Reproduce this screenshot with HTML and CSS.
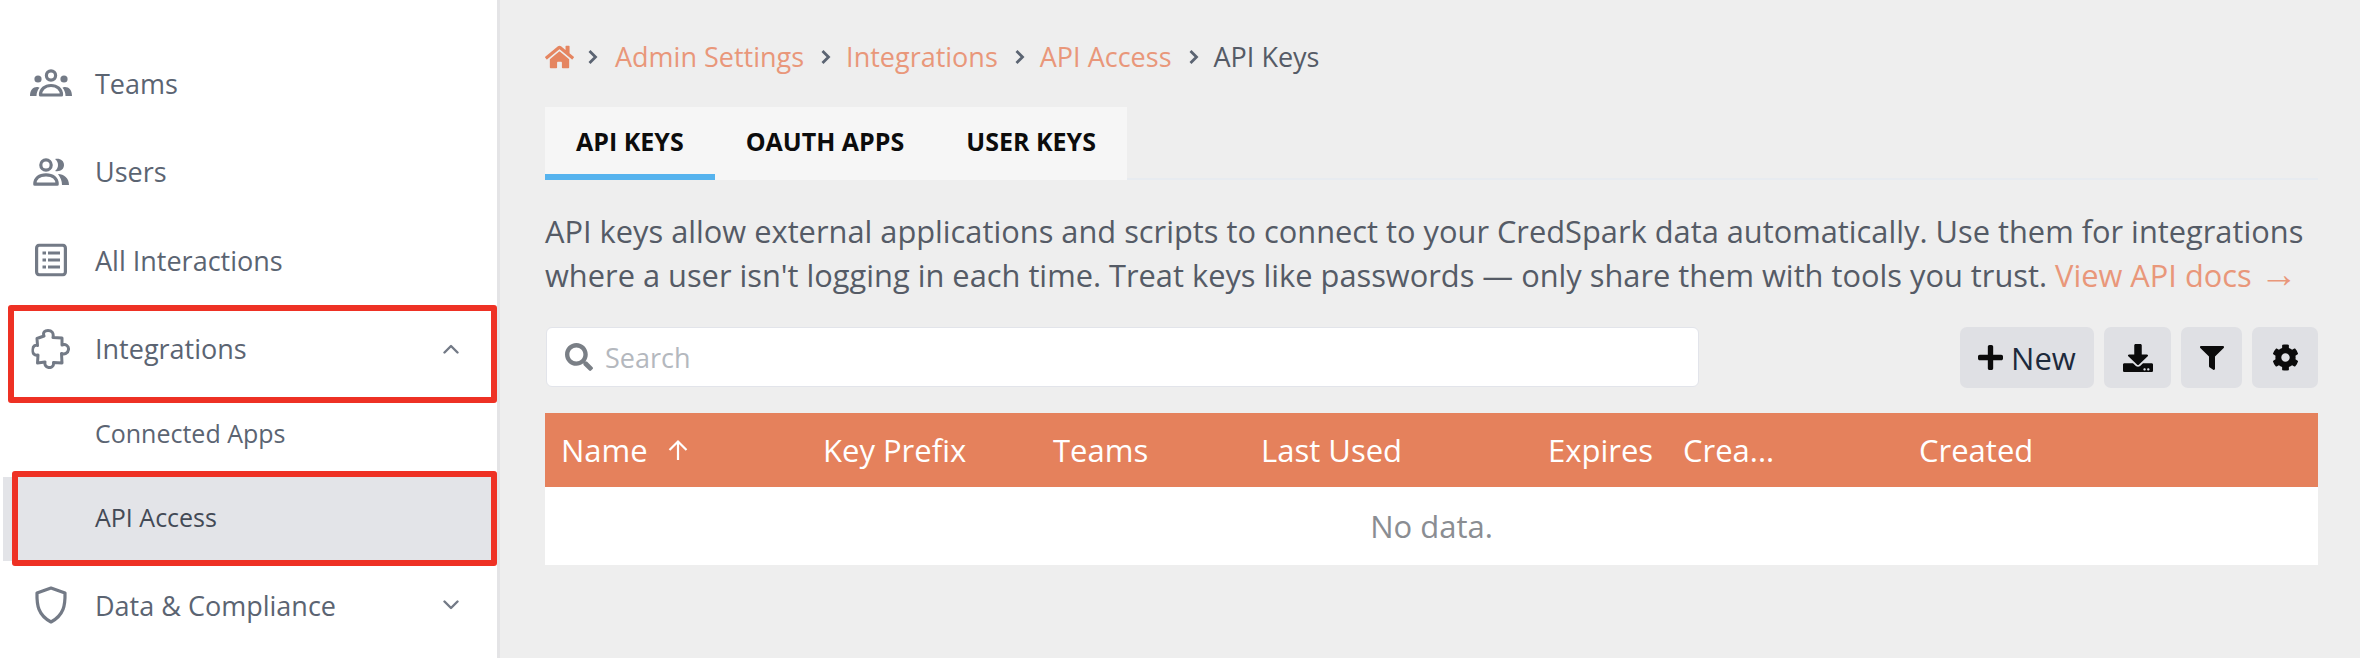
FILE: index.html
```html
<!DOCTYPE html>
<html lang="en">
<head>
<meta charset="utf-8">
<title>API Keys</title>
<link rel="stylesheet" href="styles.css">
</head>
<body>
<div class="app">
  <aside class="sidebar">
    <nav class="nav">
      <a class="nav-item">
        <svg class="nav-icon icon-teams" viewBox="0 0 42 28"><g fill="none" stroke="currentColor" stroke-width="3.2"><circle cx="21" cy="6.5" r="4.6"/><path d="M10.5 26c0-6 4.5-9.5 10.5-9.500S31.500 20 31.500 26z" stroke-linejoin="round"/></g><g fill="currentColor"><circle cx="8" cy="10" r="3.600"/><circle cx="34" cy="10" r="3.600"/><path d="M0 27c0-6 3-9 7-9 1 0 2 .3 2.500.7C7.500 21 6.500 24 6.500 27z"/><path d="M42 27c0-6-3-9-7-9-1 0-2 .3-2.500.7 2 2.300 3 5.300 3 8.300z"/></g></svg>
        <span class="nav-label">Teams</span>
      </a>
      <a class="nav-item">
        <svg class="nav-icon icon-users" viewBox="0 0 36 28"><g fill="none" stroke="currentColor" stroke-width="3.200"><circle cx="13" cy="7" r="5.200"/><path d="M1.800 26.200c0-6 4.500-9.400 11.200-9.400s11.200 3.400 11.200 9.400z" stroke-linejoin="round"/></g><g fill="currentColor"><path d="M22 1c5-1 9 1.500 9 6s-4 7-9 6c2-1.500 3-3.700 3-6s-1-4.500-3-6z"/><path d="M25 16c6 0 11 4 11 11h-7c0-4-1.500-7.500-4-11z"/></g></svg>
        <span class="nav-label">Users</span>
      </a>
      <a class="nav-item">
        <svg class="nav-icon icon-list" viewBox="0 0 32 33"><rect x="1.600" y="1.600" width="28.800" height="29.800" rx="3" fill="none" stroke="currentColor" stroke-width="3.200"/><g fill="currentColor"><rect x="7.500" y="8" width="3.500" height="3"/><rect x="13" y="8" width="12" height="3"/><rect x="7.500" y="15" width="3.500" height="3"/><rect x="13" y="15" width="12" height="3"/><rect x="7.500" y="22" width="3.500" height="3"/><rect x="13" y="22" width="12" height="3"/></g></svg>
        <span class="nav-label">All Interactions</span>
      </a>
      <a class="nav-item">
        <svg class="nav-icon icon-puzzle" viewBox="7 7 39 40"><path d="M19.500 14C18 10 20.500 8.500 23.500 8.500 27 8.500 29.500 10.500 28.500 15.500L37.500 16 37.500 23C41 21.500 44.500 24 44 27.500 43.500 31.500 40 32.500 37 31.500L37.500 41 29 40.500C29.500 44 27 46 24 45.500 21 45 20 42.500 20.500 40L13 41 13.500 33C10 34 7.500 31 8 27.500 8.500 24 11 22.500 13 23.500L12.500 16.500Z" fill="none" stroke="currentColor" stroke-width="3" stroke-linejoin="round"/></svg>
        <span class="nav-label">Integrations</span>
        <svg class="chev" viewBox="0 0 16 10"><path d="M1.500 8.500 8 2l6.500 6.500" fill="none" stroke="currentColor" stroke-width="2.400" stroke-linecap="round" stroke-linejoin="round"/></svg>
      </a>
      <a class="sub-item">Connected Apps</a>
      <a class="sub-item active">API Access</a>
      <a class="nav-item">
        <svg class="nav-icon icon-shield" viewBox="0 0 32 38"><path d="M16 2 30 7c.3 12-1 22-14 29C3 29 1.700 19 2 7z" fill="none" stroke="currentColor" stroke-width="3.200" stroke-linejoin="round"/></svg>
        <span class="nav-label">Data &amp; Compliance</span>
        <svg class="chev" viewBox="0 0 16 10"><path d="M1.500 1.500 8 8l6.500-6.500" fill="none" stroke="currentColor" stroke-width="2.400" stroke-linecap="round" stroke-linejoin="round"/></svg>
      </a>
    </nav>
  </aside>
  <main class="main">
    <div class="crumbs">
      <svg class="home" viewBox="0 0 576 512"><path d="M280.37 148.26L96 300.11V464a16 16 0 0 0 16 16l112.06-.29a16 16 0 0 0 15.92-16V368a16 16 0 0 1 16-16h64a16 16 0 0 1 16 16v95.64a16 16 0 0 0 16 16.05L464 480a16 16 0 0 0 16-16V300L295.67 148.26a12.19 12.19 0 0 0-15.3 0zM571.6 251.47L488 182.56V44.05a12 12 0 0 0-12-12h-56a12 12 0 0 0-12 12v72.61L318.47 43a48 48 0 0 0-61 0L4.34 251.47a12 12 0 0 0-1.6 16.9l25.5 31A12 12 0 0 0 45.15 301l235.22-193.74a12.19 12.19 0 0 1 15.3 0L530.9 301a12 12 0 0 0 16.9-1.6l25.5-31a12 12 0 0 0-1.7-16.93z"/></svg>
      <svg class="sep sep-first" viewBox="0 0 11 16"><path d="M2.500 2l6 6-6 6" /></svg>
      <a class="crumb">Admin Settings</a>
      <svg class="sep" viewBox="0 0 11 16"><path d="M2.500 2l6 6-6 6" /></svg>
      <a class="crumb">Integrations</a>
      <svg class="sep" viewBox="0 0 11 16"><path d="M2.500 2l6 6-6 6" /></svg>
      <a class="crumb">API Access</a>
      <svg class="sep" viewBox="0 0 11 16"><path d="M2.500 2l6 6-6 6" /></svg>
      <span class="crumb-current">API Keys</span>
    </div>
    <div class="tabbar">
      <div class="tabs">
        <a class="tab tab-active">API KEYS</a>
        <a class="tab">OAUTH APPS</a>
        <a class="tab">USER KEYS</a>
      </div>
    </div>
    <p class="intro">API keys allow external applications and scripts to connect to your CredSpark data automatically. Use them for integrations where a user isn't logging in each time. Treat keys like passwords — only share them with tools you trust. <a class="doc-link">View API docs <span class="doc-arrow">→</span></a></p>
    <div class="toolbar">
      <label class="search">
        <svg class="search-icon" viewBox="0 0 512 512"><path d="M505 442.7L405.3 343c-4.500-4.500-10.600-7-17-7H372c27.600-35.300 44-79.700 44-128C416 93.100 322.900 0 208 0S0 93.100 0 208s93.100 208 208 208c48.300 0 92.700-16.400 128-44v16.300c0 6.400 2.500 12.500 7 17l99.700 99.700c9.400 9.400 24.600 9.400 33.900 0l28.300-28.300c9.400-9.400 9.400-24.600.1-34zM208 336c-70.700 0-128-57.200-128-128 0-70.700 57.200-128 128-128 70.700 0 128 57.200 128 128 0 70.700-57.200 128-128 128z"/></svg>
        <span class="search-text">Search</span>
      </label>
      <div class="actions">
        <button class="btn btn-new"><svg class="btn-icon icon-plus" viewBox="0 32 448 448"><path d="M416 208H272V64c0-17.670-14.330-32-32-32h-32c-17.670 0-32 14.330-32 32v144H32c-17.670 0-32 14.330-32 32v32c0 17.670 14.330 32 32 32h144v144c0 17.670 14.330 32 32 32h32c17.670 0 32-14.330 32-32V304h144c17.670 0 32-14.330 32-32v-32c0-17.670-14.330-32-32-32z"/></svg>New</button>
        <button class="btn btn-export"><svg class="btn-icon icon-export" viewBox="0 0 512 512" preserveAspectRatio="none"><path d="M216 0h80c13.300 0 24 10.700 24 24v168h87.700c17.800 0 26.700 21.500 14.100 34.100L269.700 378.300c-7.500 7.500-19.800 7.500-27.300 0L90.100 226.100c-12.600-12.600-3.700-34.100 14.100-34.100H192V24c0-13.300 10.700-24 24-24zm296 376v112c0 13.300-10.700 24-24 24H24c-13.300 0-24-10.700-24-24V376c0-13.300 10.700-24 24-24h146.700l49 49c20.100 20.100 52.500 20.100 72.600 0l49-49H488c13.300 0 24 10.700 24 24zm-124 88c0-11-9-20-20-20s-20 9-20 20 9 20 20 20 20-9 20-20zm64 0c0-11-9-20-20-20s-20 9-20 20 9 20 20 20 20-9 20-20z"/></svg></button>
        <button class="btn btn-filter"><svg class="btn-icon icon-filter" viewBox="0 0 512 512"><path d="M487.976 0H24.028C2.710 0-8.047 25.866 7.058 40.971L192 225.941V432c0 7.831 3.821 15.170 10.237 19.662l80 55.980C298.020 518.690 320 507.493 320 487.980V225.941l184.947-184.970C520.021 25.896 509.338 0 487.976 0z"/></svg></button>
        <button class="btn btn-gear"><svg class="btn-icon icon-gear" viewBox="0 0 512 512"><path d="M487.400 315.700l-42.600-24.600c4.300-23.200 4.300-47 0-70.200l42.600-24.600c4.900-2.800 7.100-8.600 5.500-14-11.100-35.600-30-67.800-54.700-94.600-3.800-4.100-10-5.100-14.800-2.300L380.800 110c-17.900-15.400-38.500-27.300-60.800-35.100V25.800c0-5.600-3.900-10.500-9.400-11.700-36.700-8.200-74.300-7.800-109.200 0-5.500 1.200-9.400 6.100-9.400 11.700V75c-22.200 7.900-42.800 19.800-60.800 35.100L88.700 85.500c-4.900-2.800-11-1.900-14.800 2.300-24.700 26.700-43.600 58.900-54.700 94.600-1.700 5.400.6 11.200 5.500 14L67.300 221c-4.300 23.200-4.300 47 0 70.200l-42.600 24.600c-4.900 2.800-7.100 8.600-5.500 14 11.100 35.600 30 67.800 54.700 94.600 3.800 4.100 10 5.100 14.800 2.300l42.600-24.600c17.900 15.400 38.500 27.300 60.800 35.100v49.200c0 5.600 3.900 10.500 9.400 11.700 36.700 8.200 74.300 7.800 109.200 0 5.500-1.200 9.400-6.100 9.400-11.700v-49.200c22.200-7.900 42.800-19.800 60.800-35.100l42.600 24.600c4.900 2.800 11 1.900 14.800-2.300 24.700-26.700 43.600-58.900 54.700-94.600 1.500-5.500-.7-11.300-5.600-14.100zM256 336c-44.100 0-80-35.900-80-80s35.900-80 80-80 80 35.900 80 80-35.900 80-80 80z"/></svg></button>
      </div>
    </div>
    <div class="table">
      <div class="thead">
        <div class="th col-name">Name <svg class="sort" viewBox="0 0 20 22"><path d="M10 21V2.500M1.500 11 10 2.500 18.500 11"/></svg></div>
        <div class="th col-prefix">Key Prefix</div>
        <div class="th col-teams">Teams</div>
        <div class="th col-used">Last Used</div>
        <div class="th col-expires">Expires</div>
        <div class="th col-crea">Crea...</div>
        <div class="th col-created">Created</div>
      </div>
      <div class="empty">No data.</div>
    </div>
  </main>
</div>
<div class="mark mark-integrations"></div>
<div class="mark mark-api"></div>
</body>
</html>
```
FILE: styles.css
```css
* { box-sizing: border-box; }
html, body { margin: 0; height: 100%; overflow: hidden; }
body {
  font-family: "Open Sans", "Liberation Sans", sans-serif;
  background: #eeeeee;
  color: #555b66;
  position: relative;
}
.app { display: flex; height: 658px; }

.sidebar {
  width: 500px;
  flex: none;
  background: #fff;
  border-right: 3px solid #e4e4e6;
  padding: 39px 0 0 3px;
}
.nav { display: flex; flex-direction: column; }
.nav-item {
  height: 88.500px;
  display: flex;
  align-items: center;
  position: relative;
  padding-left: 92px;
  font-size: 27px;
  color: #5b6472;
}
.nav-icon {
  position: absolute;
  left: 48px;
  top: 50%;
  transform: translate(-50%, -50%);
  color: #737a86;
}
.icon-teams { width: 42px; height: 28px; }
.icon-users { width: 36px; height: 28px; }
.icon-list { width: 32px; height: 33px; }
.icon-puzzle { width: 39px; height: 40px; }
.icon-shield { width: 32px; height: 38px; }
.nav-label { flex: 1; }
.chev { width: 16px; height: 10px; margin-right: 38px; color: #737a86; }
.sub-item {
  height: 84px;
  display: flex;
  align-items: center;
  padding: 0 0 5px 92px;
  font-size: 25px;
  color: #5b6472;
}
.sub-item.active { background: #e3e4e8; color: #434a56; }

.main { flex: 1; min-width: 0; padding: 36px 42px 0 45px; }

.crumbs { display: flex; align-items: center; height: 41px; font-size: 27px; }
.home { width: 29px; height: 26px; fill: #e58560; margin-right: 13px; }
.sep { width: 11px; height: 16px; margin-right: 15px; fill: none; stroke: #5b6472; stroke-width: 2.800; }
.sep-first { margin-right: 17px; }
.crumb { color: #e9977a; margin-right: 16px; }
.crumb-current { color: #555b66; }

.tabbar {
  margin-top: 30px;
  height: 73px;
  border-bottom: 2px solid #e7ebf0;
  display: flex;
}
.tabs { display: flex; background: #f6f6f6; height: 73px; }
.tab {
  display: flex;
  align-items: center;
  padding: 0 31px;
  height: 73px;
  font-size: 25px;
  font-weight: 700;
  color: #0c0c0c;
  border-bottom: 6px solid transparent;
}
.tab-active { border-bottom-color: #56b3ee; }

.intro {
  margin: 30px 0 0;
  font-size: 30.800px;
  line-height: 43px;
  color: #555b66;
}
.doc-link { color: #e9977a; }
.doc-arrow { font-size: 38px; line-height: 1; }

.toolbar { display: flex; justify-content: space-between; margin-top: 30px; height: 61px; }
.search {
  width: 1153px;
  height: 60px;
  margin-left: 1px;
  display: flex;
  align-items: center;
  gap: 12px;
  padding-left: 18px;
  background: #fff;
  border: 1px solid #e2e4ea;
  border-radius: 6px;
}
.search-icon { width: 28px; height: 28px; fill: #7a7f86; }
.search-text { font-size: 27px; color: #b4b8be; }
.actions { display: flex; gap: 10px; }
.btn {
  height: 61px;
  border: 0;
  padding: 0;
  border-radius: 7px;
  background: #dfe0e4;
  display: flex;
  align-items: center;
  justify-content: center;
  font-family: inherit;
  font-size: 31px;
  color: #1d2a3c;
}
.btn-icon { fill: #0b0b0b; }
.icon-plus { width: 25px; height: 25px; }
.icon-export { width: 30px; height: 28px; }
.icon-filter { width: 24px; height: 24px; }
.icon-gear { width: 27px; height: 27px; }
.btn-new { width: 134px; gap: 8px; }
.btn-export { width: 67px; }
.btn-filter { width: 61px; }
.btn-gear { width: 66px; }

.table { margin-top: 25px; }
.thead {
  display: flex;
  align-items: center;
  height: 74px;
  background: #e5815c;
  color: #fff;
  font-size: 31px;
}
.th { padding-left: 16px; white-space: nowrap; }
.col-name { width: 262px; display: flex; align-items: center; gap: 20px; }
.col-prefix { width: 230px; }
.col-teams { width: 208px; }
.col-used { width: 287px; }
.col-expires { width: 135px; }
.col-crea { width: 236px; }
.col-created { flex: 1; }
.sort { width: 20px; height: 22px; fill: none; stroke: #fff; stroke-width: 2.200; }
.empty {
  height: 78px;
  background: #fff;
  display: flex;
  align-items: center;
  justify-content: center;
  font-size: 31px;
  color: #8a8d92;
}

.mark {
  position: absolute;
  border: 6px solid #ee3124;
  border-radius: 3px;
  pointer-events: none;
}
.mark-integrations { left: 8px; top: 305px; width: 489px; height: 98px; }
.mark-api { left: 12px; top: 471px; width: 485px; height: 95px; }
```
